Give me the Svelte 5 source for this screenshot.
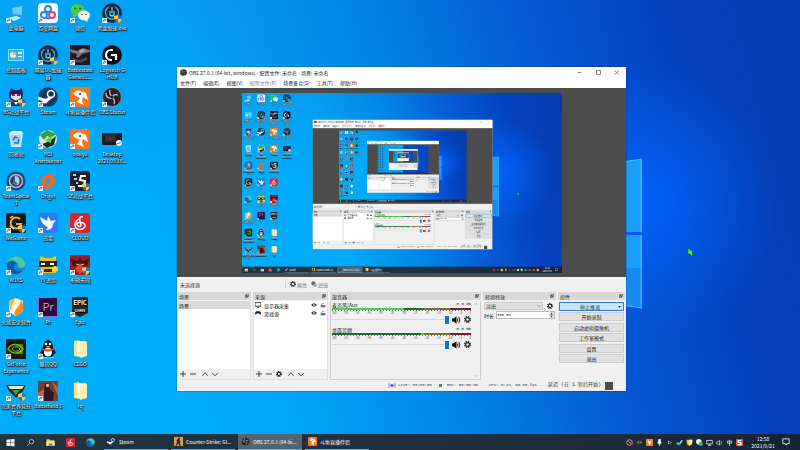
<script lang="ts">
    /** How many times the captured screen repeats inside its own preview. */
    const maxDepth = 2

    type Shortcut = {label: string; icon: string; plain?: boolean; shield?: boolean}

    // Artwork for a 20x20 box
    const art: Record<string, string> = {
        pc: '<path d="M5 4l12-2v11L6 12z" fill="#2b9be0"/><path d="M6 5l10-2v9L7 11z" fill="#66cdf6"/><path d="M2 15l8-2 5 2-7 3z" fill="#cfe9f7"/>',
        panel: '<path d="M2 4h16v12H2z" fill="#8fdcfa"/><path d="M3 5h14v10H3z" fill="#3ab2ea"/><circle cx="7" cy="10" r="3" fill="#d9f4ff"/><path d="M7 10V7a3 3 0 0 1 3 3z" fill="#f4b73b"/><path d="M12 7h4v2h-4zM12 11h4v1h-4z" fill="#e8f9ff"/>',
        helmet: '<path d="M3 7l2-6 3 2h5l3-2 1 6-1 5-6 4-6-4z" fill="#1d2553"/><path d="M5 7h10v4l-5 3-5-3z" fill="#e3dfea"/><path d="M5 7h4v2H6zM11 7h4l-1 2h-3z" fill="#7a2f62"/><path d="M3 14l5 1 2-2 2 2 4-1 1 5H3z" fill="#28336b"/><path d="M8 15h4l-2 3z" fill="#fff"/>',
        bin: '<path d="M3 4h14l-2 14H5z" fill="#cfeafa"/><path d="M3 4l3-2h9l2 2z" fill="#f6fbff"/><path d="M5 6h10l-1 10H6z" fill="#a4d4f2"/><path d="M7 11l2-3 3 1M13 10l-1 4H8" fill="none" stroke="#1978d0" stroke-width="1.5"/>',
        teamspeak: '<circle cx="10" cy="10" r="9.5" fill="#233f6c"/><circle cx="10" cy="10" r="6.5" fill="none" stroke="#a9bddb" stroke-width="1.5"/><path d="M8 5c6-1 7 5 4 9-3 0-5-1-5-3z" fill="#b7c9e2"/><path d="M8 5v6l3 2" fill="none" stroke="#233f6c" stroke-width="1.500"/>',
        wegame: '<rect width="20" height="20" rx="2" fill="#15171b"/><path d="M14 6a5.500 5.500 0 1 0 0 8l1-3h-5" fill="none" stroke="#e8b12c" stroke-width="2"/><path d="M4 5l3-2M4 13l4 3" stroke="#f4e4ad" stroke-width="1.500"/>',
        edge: '<circle cx="10" cy="10" r="9.5" fill="#1688d4"/><path d="M1 8C3 0 16-2 19 8c1 4-3 6-7 4 2-4-3-7-6-4-2 1-4 1-5 0z" fill="#4cc9a5"/><path d="M1 9c2-5 9-4 9 0-4 2-2 8 6 7-4 5-15 4-15-7z" fill="#0e5cae"/>',
        fire: '<path d="M3 4l7-3 7 3v8c0 4-7 7-7 7s-7-3-7-7z" fill="#fff4e1"/><path d="M3 4l6-3c0 5-5 7-3 14-3-3-3-6-3-11z" fill="#ffb02e"/><path d="M15 3c4 6 3 12-5 16-5-5 4-8 5-16z" fill="#ff8a16"/>',
        nvidia: '<rect width="20" height="20" fill="#141a12"/><path d="M2 10c3-6 11-6 15 0-4 6-11 5-15 0z" fill="none" stroke="#76b900" stroke-width="1.4"/><path d="M6 10c2-3 6-3 8 0-2 3-6 3-8 0z" fill="none" stroke="#76b900"/><path d="M10 5h7v10h-7v-2c4 0 5-2 5-3s-2-3-5-3z" fill="#76b900" opacity=".6"/>',
        wings: '<path d="M0 4h20l-3 6-7 7-7-7z" fill="#202b24"/><path d="M2 5h16l-2 3H4z" fill="#e7ebe1"/><path d="M6 9h8l-4 5z" fill="#3f9b54"/>',
        netdisk: '<rect width="20" height="20" rx="4" fill="#f8fafe"/><circle cx="10" cy="6" r="3" fill="none" stroke="#2883f3" stroke-width="2"/><circle cx="6" cy="12" r="3" fill="none" stroke="#2883f3" stroke-width="2"/><circle cx="14" cy="12" r="3" fill="none" stroke="#e5405d" stroke-width="2"/><path d="M8 14q2 3 5 0" fill="none" stroke="#2883f3" stroke-width="2"/>',
        uu: '<circle cx="10" cy="10" r="9.8" fill="#17243c"/><path d="M7 4a6.500 6.500 0 1 0 6 0" fill="none" stroke="#37b4d8" stroke-width="1.300"/><path d="M8 8v4q2 2 4 0V8M10 4v6" fill="none" stroke="#7fd9e8" stroke-width="1.200"/>',
        steam: '<circle cx="10" cy="10" r="9.800" fill="#123b63"/><path d="M0 11l8 3 5-4" fill="none" stroke="#fff" stroke-width="3"/><circle cx="13" cy="7" r="3.500" fill="#123b63" stroke="#fff" stroke-width="1.500"/><circle cx="7" cy="14" r="2.500" fill="#fff"/>',
        msi: '<circle cx="10" cy="10" r="9" fill="#dbe9d2"/><path d="M2 6l7-5 9 4-5 4-4-2-3 4z" fill="#2ba046"/><path d="M4 15l8-3 6-5-2 9-7 3z" fill="#1e2c26"/><path d="M7 12l7-6-1 8z" fill="#5fd13c"/>',
        origin: '<path d="M12 0c-1 2-1 3 0 3 8 3 6 13-1 14l-4 3c1-2 1-3 0-3C0 14 3 4 9 4z" fill="#f26a21"/><circle cx="10" cy="10" r="2.500" fill="#0ba5ee"/>',
        bird: '<rect width="20" height="20" rx="3" fill="#2c7df1"/><path d="M2 4l7 4 1-5 3 5 5-1-3 4c0 4-3 6-7 6l2-3c-4-1-7-5-8-10z" fill="#fff"/>',
        yy: '<path d="M2 1l5 2h6l5-2v17H3z" fill="#f6bd15"/><path d="M1 6h18v6H1z" fill="#27201c"/><path d="M3 8h4v2H3zM12 8h4v2h-4z" fill="#fff"/><path d="M6 14h8v3H6z" fill="#4b250f"/><circle cx="17" cy="14" r="3" fill="#ffd54b"/>',
        pr: '<rect width="20" height="20" fill="#2a0b3d"/><rect x=".5" y=".5" width="19" height="19" fill="none" stroke="#9b5fd0"/><text x="10" y="14" font-size="11" text-anchor="middle" fill="#e09cff">Pr</text>',
        qq: '<path d="M5 8c0-9 10-9 10 0l3 6-2 1-2 3H6l-2-3-2-1z" fill="#111820"/><ellipse cx="10" cy="13" rx="4" ry="4.500" fill="#fff"/><circle cx="8" cy="5" r="1.300" fill="#fff"/><circle cx="12" cy="5" r="1.300" fill="#fff"/><path d="M4 9q6 3 12 0v2q-6 3-12 0z" fill="#e52b26"/><path d="M7 7h6l-3 1zM4 18h5v1H4zM11 18h5v1h-5z" fill="#ffad1d"/>',
        battlefield: '<rect width="20" height="20" fill="#70402f"/><path d="M7 2l4 1 1 5 4 4-1 8H5l1-9z" fill="#2c1a1a"/><path d="M0 12l6-4v12H0zM14 1l6 5v9z" fill="#b7654a"/><path d="M8 3h3v3H8z" fill="#d8a487"/>',
        wechat: '<ellipse cx="7.500" cy="7" rx="7" ry="6" fill="#4bcb4b"/><path d="M3 10v5l4-2z" fill="#4bcb4b"/><ellipse cx="14" cy="12.500" rx="6" ry="5" fill="#f0f3ef"/><path d="M17 15l1 4-4-2z" fill="#f0f3ef"/><circle cx="5" cy="5.500" r="1" fill="#17652a"/><circle cx="10" cy="5.500" r="1" fill="#17652a"/><circle cx="12" cy="11.500" r=".8" fill="#5d6962"/><circle cx="16" cy="11.500" r=".8" fill="#5d6962"/>',
        tarkov: '<rect width="20" height="20" fill="#1b1a22"/><path d="M0 4l8 2 5-3 7 2v2l-8 2-4 4-2-1 1-3-7-2z" fill="#78707a"/><path d="M9 5l4-1 2 2-5 2z" fill="#b9a9a6"/><path d="M3 13l6 2 8-3v3l-7 3-7-2z" fill="#4a4252"/>',
        douyu: '<rect width="20" height="20" rx="3" fill="#f57718"/><path d="M3 6l5-3 8 3 2 7-5-3-1 4 2 4-7-3 3-4-6-3z" fill="#fff"/><circle cx="10" cy="7" r="1" fill="#333"/>',
        five: '<rect width="20" height="20" rx="3" fill="#191f30"/><path d="M3 4h3M4 8h3M6 12h2" fill="none" stroke="#fff" stroke-width="1.500"/><path d="M16 5h-5l-1 4 5 1-1 5H8" fill="none" stroke="#fff" stroke-width="2"/>',
        netease: '<rect width="20" height="20" rx="3" fill="#e1202e"/><path d="M13 4c-3-1-4 1-3 4l1 4c-1 3-4 1-4-1s6-3 8 1c1 5-10 7-10 0 0-3 2-5 4-6" fill="none" stroke="#fff" stroke-width="1.500"/>',
        redgame: '<rect width="20" height="20" fill="#9c1d23"/><path d="M0 3l7 3 3-3 3 3 7-3-3 8H3z" fill="#4f1118"/><path d="M5 14l5-6 5 6-5 5z" fill="#dc453b"/><path d="M6 9l3 1M14 9l-3 1" stroke="#ffcc8c"/>',
        epic: '<path d="M2 0h16v16l-8 4-8-4z" fill="#26262a"/><text x="10" y="8" font-size="6" font-weight="700" text-anchor="middle" fill="#fff">EPIC</text><text x="10" y="15" font-size="3" font-weight="700" text-anchor="middle" fill="#fff">GAMES</text>',
        folder: '<path d="M4 2l5-1 1 17-6-1z" fill="#ffe08a"/><path d="M7 2h9v15H7z" fill="#fffdf0"/><path d="M10 4l7-1v14l-7 2z" fill="#ffedb2"/>',
        logitech: '<circle cx="10" cy="10" r="9.800" fill="#08090b"/><path d="M11 5H9a5 5 0 0 0 0 10h1M9 10h5v5" fill="none" stroke="#fff" stroke-width="2.200"/>',
        obs: '<circle cx="10" cy="10" r="9.500" fill="#242128" stroke="#8d8b90"/><path d="M8 3a5 5 0 0 0 4 7M16 8a5 5 0 0 0-7 4M12 17a5 5 0 0 0-3-7M4 6q0 6 6 5" fill="none" stroke="#c4c2c7" stroke-width="1.300"/><circle cx="10" cy="10" r="1.500" fill="#242128"/>',
        video: '<path d="M0 4h20v12H0z" fill="#1b1b20"/><path d="M3 6h11v7H3z" fill="#303036"/><circle cx="8" cy="10" r="1.500" fill="#8b2938"/><circle cx="17" cy="14" r="3" fill="#eef6ff"/><path d="M15.500 14l1 1 2-2" fill="none" stroke="#2475e6"/>',
        csgo: '<rect width="20" height="20" fill="#dba33d"/><path d="M11 1l3 2-2 4 3 2-2 3 2 8h-3l-3-6-3 6H3l4-10-2-2 4-5z" fill="#3b2820"/>',
        explorer: '<path d="M1 3h7l2 2h9v12H1z" fill="#f5c542"/><path d="M1 8h18v9H1z" fill="#ffe79a"/><path d="M6 12h8v5H6z" fill="#3393d9"/>'
    }

    const shortcuts: Shortcut[] = [
        {label: '此电脑', icon: 'pc'},
        {label: '控制面板', icon: 'panel', plain: true},
        {label: 'B5对战平台', icon: 'helmet', shield: true},
        {label: '回收站', icon: 'bin', plain: true},
        {label: 'TeamSpeak\n3', icon: 'teamspeak'},
        {label: 'WeGame', icon: 'wegame', shield: true},
        {label: 'W10S', icon: 'edge'},
        {label: '火绒安全软件', icon: 'fire'},
        {label: 'GeForce\nExperience', icon: 'nvidia'},
        {label: '完美世界竞技\n平台', icon: 'wings', shield: true},
        {label: '百度网盘', icon: 'netdisk'},
        {label: '网易UU加速\n器', icon: 'uu', shield: true},
        {label: 'Steam', icon: 'steam'},
        {label: 'MSI\nAfterburner', icon: 'msi'},
        {label: 'Origin', icon: 'origin'},
        {label: '迅雷', icon: 'bird'},
        {label: 'YY语音', icon: 'yy'},
        {label: 'Pr', icon: 'pr'},
        {label: '腾讯QQ', icon: 'qq'},
        {label: 'Battlefield 1', icon: 'battlefield'},
        {label: '微信', icon: 'wechat'},
        {label: 'Battlestate\nGames L...', icon: 'tarkov'},
        {label: '斗鱼直播伴侣', icon: 'douyu'},
        {label: 'douyu', icon: 'douyu'},
        {label: '5E对战平台', icon: 'five', shield: true},
        {label: 'CLOUD', icon: 'netease'},
        {label: '永劫无间', icon: 'redgame', shield: true},
        {label: 'Epic', icon: 'epic'},
        {label: 'CSGO', icon: 'folder', plain: true},
        {label: 'rq', icon: 'folder', plain: true},
        {label: '黑盒加速.exe', icon: 'uu', shield: true},
        {label: 'Logitech G\nHUB', icon: 'logitech'},
        {label: 'OBS Studio', icon: 'obs'},
        {label: 'Desktop\n2021.09.18...', icon: 'video', plain: true}
    ]

    const menus = ['文件(F)', '编辑(E)', '视图(V)', '配置文件(P)', '场景集合(S)', '工具(T)', '帮助(H)']
    const controls = ['停止推流', '开始录制', '启动虚拟摄像机', '工作室模式', '设置', '退出']
    const scale = [-60, -55, -50, -45, -40, -35, -30, -25, -20, -15, -10, -5, 0]
    const channels = [
        {name: '麦克风/Aux', level: 52, kind: 'live'},
        {name: '桌面音频', level: 0, kind: 'quiet'}
    ]
    const pinned = [
        {name: '文件资源管理器', icon: 'explorer'},
        {name: '网易云音乐', icon: 'netease'},
        {name: 'Microsoft Edge', icon: 'edge'}
    ]
    const tasks = [
        {name: 'Steam', icon: 'steam'},
        {name: 'Counter-Strike: Gl...', icon: 'csgo'},
        {name: 'OBS 27.0.1 (64-bi...', icon: 'obs', active: true},
        {name: '斗鱼直播伴侣', icon: 'douyu'}
    ]

    // Tray artwork uses a 10x10 box
    const tray = [
        '<circle cx="5" cy="5" r="4" fill="#222" stroke="#ddd"/><circle cx="7" cy="7" r="2" fill="#e33"/><path d="M3 3l4 3" stroke="#ddd"/>',
        '<path d="M1 5q4-4 8 0-4 4-8 0z" fill="#76b900"/><circle cx="5" cy="5" r="1.500" fill="#18301a"/>',
        '<path d="M0 0h10v10H0z" fill="#f08222"/><path d="M2 2l6 2-3 5z" fill="#fff"/>',
        '<rect x="3" width="4" height="7" rx="2" fill="#fff"/><path d="M2 5q3 5 6 0M5 8v2" stroke="#fff" fill="none"/>',
        '<path d="M3 2v6l5-3z" fill="#a9b4bf"/><circle cx="5" cy="5" r="1" fill="#111"/>',
        '<path d="M1 6l4 1 4-5" fill="none" stroke="#d8e8f8" stroke-width="2"/><circle cx="4" cy="7" r="2" fill="#57a0df"/>',
        '<path d="M1 1h8v4q0 3-4 5-4-2-4-5z" fill="#ffc247"/><path d="M5 1v8q4-2 4-4V1z" fill="#fff1cf"/>',
        '<circle cx="4" cy="4" r="4" fill="#e4f2e9"/><circle cx="7" cy="7" r="3" fill="#35b567"/>',
        '<path d="M1 2h8v5H1zM5 7v2M3 9h4" fill="none" stroke="#fff"/>',
        '<path d="M1 4v3h2l2 2V2L3 4zM7 3q2 2 0 5" fill="none" stroke="#ddd"/>',
        '<path d="M2 3h6v3H2zM5 1v9" fill="none" stroke="#eee"/>',
        '<rect width="10" height="10" rx="1" fill="#f04d24"/><path d="M8 2H3v3h4v3H2" fill="none" stroke="#fff" stroke-width="1.500"/>'
    ]
</script>

{#snippet glyph(name: string)}
    <svg class="glyph" viewBox="0 0 20 20" aria-hidden="true">{@html art[name]}</svg>
{/snippet}

{#snippet gear()}
    <svg class="tool" viewBox="0 0 10 10" aria-hidden="true">
        <circle cx="5" cy="5" r="4" fill="none" stroke="currentColor" stroke-width="2" stroke-dasharray="2 1.140" />
        <circle cx="5" cy="5" r="2.700" fill="none" stroke="currentColor" stroke-width="1.600" />
    </svg>
{/snippet}

{#snippet stroke(d: string)}
    <svg class="tool" viewBox="0 0 10 10" aria-hidden="true">
        <path {d} fill="none" stroke="currentColor" stroke-width="1.400" />
    </svg>
{/snippet}

{#snippet dockTitle(name: string)}
    <header>
        <h2>{name}</h2>
        <button aria-label="浮动">
            <svg viewBox="0 0 10 10"><path d="M3 1h6v5H3zM1 4h5v5H1z" fill="#ddd" stroke="#333" stroke-width="1.500" /></svg>
        </button>
    </header>
{/snippet}

<!-- The innermost screens are too small for text, so only their blocks are drawn -->
{#snippet sketch(depth: number)}
    <path d="M0 0h400v434H0z" fill="#00a4f4" />
    <path d="M400 0h400v434H400z" fill="#0648c2" />
    <path d="M0 434h800v16H0z" fill="#1f303c" />
    <path d="M16 3v410M48 3v410M80 3v410" fill="none" stroke="#3d5c78" stroke-width="18" stroke-dasharray="20 22" />
    <path d="M626 160l16-1v149l-16-3z" fill="#199dfb" />
    <path d="M177 67h449v324H177z" fill="#f0f0f0" />
    <path d="M177 67h449v21H177z" fill="#fff" />
    <path d="M177 88h449v189H177z" fill="#4c4c4c" />
    <path d="M177 292h449v8H177z" fill="#d8d8d8" />
    <path d="M333 309h138M333 333h138" stroke="#347a42" stroke-width="4" />
    <path d="M559 307h65M559 328h65M559 349h65" stroke="#bbb" stroke-width="8" />
    {#if depth > 0}
        <svg x="241" y="92" width="320" height="180" viewBox="0 0 800 450">{@render sketch(depth - 1)}</svg>
    {/if}
{/snippet}

{#snippet desktop(depth: number)}
    <div class="desktop">
        <svg class="wallpaper" viewBox="0 0 800 450" preserveAspectRatio="none" aria-hidden="true">
            <path d="M540 174l102-15v73H540zM540 235h102v73l-102-15z" fill="#1b9dff" />
            <path d="M540 268h102v40l-102-15z" fill="#1689f6" />
            <path d="M641 159v73M641 235v73M540 174l102-15M540 293l102 15" fill="none" stroke="#37c5ff" />
        </svg>

        <nav class="shortcuts">
            {#each shortcuts as item}
                <button class="shortcut">
                    <span class="picture">
                        {@render glyph(item.icon)}
                        {#if !item.plain}
                            <svg class="arrow" viewBox="0 0 6 6"><path d="M0 0h6v6H0z" fill="#f4f8fc" /><path d="M1 5q0-3 3-3M3 1l2 1-2 2" fill="none" stroke="#1c62b4" /></svg>
                        {/if}
                        {#if item.shield}
                            <svg class="shield" viewBox="0 0 8 8"><path d="M0 1l4-1v4H0zM4 4h4q-1 3-4 4z" fill="#ffc83d" /><path d="M4 0l4 1v3H4zM0 4h4v4Q1 7 0 4z" fill="#2677c9" /></svg>
                        {/if}
                    </span>
                    <span class="name">{item.label}</span>
                </button>
            {/each}
        </nav>

        <main class="window">
            <div class="titlebar">
                {@render glyph('obs')}
                <h1>OBS 27.0.1 (64-bit, windows) - 配置文件: 未命名 - 场景: 未命名</h1>
                <button aria-label="最小化">{@render stroke('M1 5h8')}</button>
                <button aria-label="最大化">{@render stroke('M1 1h8v8H1z')}</button>
                <button aria-label="关闭">{@render stroke('M1 1l8 8M9 1l-8 8')}</button>
            </div>
            <nav class="menubar">
                {#each menus as menu, i}
                    <button class:muted={i === 3}>{menu}</button>
                {/each}
            </nav>

            <div class="preview">
                <svg class="capture" viewBox="0 0 800 450" aria-hidden="true" inert>
                    {#if depth < maxDepth}
                        <foreignObject width="800" height="450">
                            {@render desktop(depth + 1)}
                        </foreignObject>
                    {:else}
                        {@render sketch(2)}
                    {/if}
                </svg>
            </div>

            <div class="context">
                <span>未选择源</span>
                <button>{@render gear()}属性</button>
                <button>
                    <svg class="tool" viewBox="0 0 10 10"><circle cx="4" cy="4" r="3.500" fill="#666" /><circle cx="7" cy="7" r="3" fill="#aaa" /></svg>滤镜
                </button>
            </div>

            <div class="docks">
                <section class="scenes">
                    {@render dockTitle('场景')}
                    <ul>
                        <li class="selected">场景</li>
                    </ul>
                    <div class="toolbar">
                        <button aria-label="添加">{@render stroke('M0 5h10M5 0v10')}</button>
                        <button aria-label="移除">{@render stroke('M0 5h10')}</button>
                        <button class="apart" aria-label="上移">{@render stroke('M0 8l5-5 5 5')}</button>
                        <button aria-label="下移">{@render stroke('M0 3l5 5 5-5')}</button>
                    </div>
                </section>

                <section class="sources">
                    {@render dockTitle('来源')}
                    <ul>
                        {#each ['显示器采集', '游戏源'] as source, i}
                            <li>
                                {#if i === 0}
                                    {@render stroke('M0 1h10v6H0zM3 9h4')}
                                {:else}
                                    <svg class="tool" viewBox="0 0 10 10"><path d="M2 2h6q2 1 2 5-1 2-3-1H3q-2 3-3 1 0-4 2-5z" fill="#222" /></svg>
                                {/if}
                                <span>{source}</span>
                                <button aria-label="显示">
                                    <svg class="tool" viewBox="0 0 10 10"><path d="M0 5q5-6 10 0-5 6-10 0z" fill="#333" /><circle cx="5" cy="5" r="1.500" fill="#ddd" /></svg>
                                </button>
                                <button aria-label="锁定">
                                    <svg class="tool" viewBox="0 0 10 10"><path d="M1 5h8v4H1z" fill="#777" /><path d="M3 5V3q2-3 4 0" fill="none" stroke="#888" stroke-width="1.500" /></svg>
                                </button>
                            </li>
                        {/each}
                    </ul>
                    <div class="toolbar">
                        <button aria-label="添加">{@render stroke('M0 5h10M5 0v10')}</button>
                        <button aria-label="移除">{@render stroke('M0 5h10')}</button>
                        <button aria-label="属性">{@render gear()}</button>
                        <button class="apart" aria-label="上移">{@render stroke('M0 8l5-5 5 5')}</button>
                        <button aria-label="下移">{@render stroke('M0 3l5 5 5-5')}</button>
                    </div>
                </section>

                <section class="mixer">
                    {@render dockTitle('混音器')}
                    <div class="mixer-body">
                        <div class="channels">
                            {#each channels as channel}
                                <div class="channel">
                                    <div class="channel-title">
                                        <span>{channel.name}</span>
                                        <span class="mono">0.0 dB</span>
                                    </div>
                                    <div class={`meter ${channel.kind}`}>
                                        <div class="level" style={`width: ${channel.level}%`}></div>
                                    </div>
                                    <div class="ticks"></div>
                                    <div class="scale">
                                        {#each scale as db}<span>{db}</span>{/each}
                                    </div>
                                    <div class="volume">
                                        <input type="range" value="100" aria-label={channel.name} />
                                        <button aria-label="静音">
                                            <svg class="speaker" viewBox="0 0 12 10"><path d="M0 3h2l4-3v10L2 7H0z" fill="#111" /><path d="M7 3q2 2 0 4M9 1q3 4 0 8" fill="none" stroke="#111" stroke-width="1.300" /></svg>
                                        </button>
                                        <button aria-label="音频设置">{@render gear()}</button>
                                    </div>
                                </div>
                            {/each}
                        </div>
                        <div class="scrollbar">
                            {@render stroke('M1 7l4-4 4 4')}
                            {@render stroke('M1 3l4 4 4-4')}
                        </div>
                    </div>
                </section>

                <section class="transitions">
                    {@render dockTitle('转场特效')}
                    <div class="fields">
                        <div class="field">
                            <span class="picker">
                                <select aria-label="转场特效"><option>淡出</option></select>
                                {@render stroke('M1 3l4 4 4-4')}
                            </span>
                            <button aria-label="转场设置">{@render gear()}</button>
                        </div>
                        <label class="field">
                            时长
                            <span class="spin">
                                <input class="mono" type="text" value="300 ms" />
                                <svg viewBox="0 0 6 10"><path d="M1 4l2-3 2 3zM1 6l2 3 2-3z" fill="#333" /></svg>
                            </span>
                        </label>
                    </div>
                </section>

                <section class="controls">
                    {@render dockTitle('控件')}
                    <div class="actions">
                        {#each controls as action, i}
                            <button class:primary={i === 0}>
                                <span>{action}</span>
                                {#if i === 0}
                                    <svg viewBox="0 0 6 4"><path d="M0 0h6L3 4z" fill="#154c86" /></svg>
                                {/if}
                            </button>
                        {/each}
                    </div>
                </section>
            </div>

            <footer class="status mono">
                <svg class="signal" viewBox="0 0 16 10"><path d="M4 1Q1 5 4 9M1 1q-2 4 0 8M12 1q3 4 0 8M15 1q2 4 0 8" fill="none" stroke="#6866d8" stroke-width="1.200" /><circle cx="8" cy="5" r="3" fill="#4b49c8" /></svg>
                <span class="live">LIVE: 00:00:00</span>
                <span class="dot"></span>
                <span class="rec">REC: 00:00:00</span>
                <span class="cpu">CPU: 0.4%, 60.00 fps</span>
                <span class="delay">延迟 (在 1 秒后开始)</span>
                <span class="block"></span>
            </footer>
        </main>

        <svg class="cursor" viewBox="0 0 5 8" aria-hidden="true"><path d="M0 0l5 4-1 1 1 2-2 1-1-2-2 0z" fill="#43f03a" stroke="#0b4b13" stroke-width=".5" /></svg>

        <footer class="taskbar">
            <button class="pin" aria-label="开始">
                <svg class="glyph" viewBox="0 0 20 20"><path d="M1 4l8-1v7H1zM10 3l9-1v8h-9zM1 11h8v7l-8-1zM10 11h9v8l-9-1z" fill="#f4f8fa" /></svg>
            </button>
            <button class="pin" aria-label="搜索">
                <svg class="glyph" viewBox="0 0 20 20"><circle cx="12" cy="8" r="5" fill="none" stroke="#ddd" stroke-width="1.500" /><path d="M8 12l-6 6" stroke="#ddd" stroke-width="1.500" /></svg>
            </button>
            {#each pinned as item}
                <button class="pin" aria-label={item.name}>{@render glyph(item.icon)}</button>
            {/each}
            <div class="tasks">
                {#each tasks as task}
                    <button class="task" class:active={task.active}>
                        {@render glyph(task.icon)}
                        <span>{task.name}</span>
                    </button>
                {/each}
            </div>
            <div class="tray">
                {#each tray as icon}
                    <svg viewBox="0 0 10 10" aria-hidden="true">{@html icon}</svg>
                {/each}
            </div>
            <div class="clock">
                <time>12:58</time>
                <span>2021/9/21</span>
            </div>
            <button class="notice" aria-label="通知">
                <svg viewBox="0 0 10 10"><path d="M1 1h8v6H6L5 9 4 7H1z" fill="none" stroke="#fff" /></svg>
            </button>
        </footer>
    </div>
{/snippet}

<div class="screen">
    {@render desktop(0)}
</div>

<style>
    :global(body) {
        margin: 0;
        overflow: hidden;
    }

    .screen {
        height: 100vh;
    }

    .desktop {
        position: relative;
        display: flex;
        flex-direction: column;
        height: 100%;
        overflow: hidden;
        font: 5px/7px 'Noto Sans CJK SC', sans-serif;
        color: #222;
        background:
            radial-gradient(circle at 80% 45%, rgba(0, 100, 255, 0.9), rgba(0, 90, 245, 0) 20%),
            radial-gradient(ellipse at 20% 0, rgba(20, 110, 205, 0.2), rgba(20, 110, 205, 0) 30%),
            linear-gradient(76deg, #00aef8 0%, #00aafa 30%, #0088e6 50%, #0558d2 70%, #0442bf 84%, #063bac 100%);
    }

    .desktop * {
        box-sizing: border-box;
    }

    .wallpaper {
        position: absolute;
        inset: 0;
        width: 100%;
        height: 100%;
    }

    button,
    input,
    select {
        margin: 0;
        padding: 0;
        border: 0;
        background: none;
        font: inherit;
        color: inherit;
    }

    svg {
        display: block;
        flex: none;
    }

    h1,
    h2,
    ul {
        margin: 0;
        padding: 0;
        font: inherit;
        list-style: none;
    }

    .mono {
        font-family: 'Liberation Mono', 'Noto Sans CJK SC', monospace;
        font-size: 4px;
    }

    .tool {
        width: 6px;
        height: 6px;
    }

    /* Desktop shortcuts */
    .shortcuts {
        position: relative;
        flex: 1;
        min-height: 0;
        display: grid;
        grid-auto-flow: column;
        grid-template-rows: repeat(10, 42px);
        grid-auto-columns: 32px;
    }

    .shortcut {
        display: flex;
        flex-direction: column;
        align-items: center;
        gap: 1px;
        padding-top: 3px;
        color: #fff;
        text-shadow: 0 0 1px #000, 0 1px 1px #000, 1px 1px 1px #000;
    }

    .picture {
        position: relative;
    }

    .picture .glyph {
        width: 20px;
        height: 20px;
    }

    .arrow,
    .shield {
        position: absolute;
        bottom: 0;
    }

    .arrow {
        left: 0;
        width: 5px;
        height: 5px;
    }

    .shield {
        right: 0;
        width: 8px;
        height: 8px;
    }

    .name {
        white-space: pre;
    }

    /* OBS window */
    .window {
        position: absolute;
        inset: 67px 174px 59px 177px;
        display: flex;
        flex-direction: column;
        background: #f0f0f0;
        box-shadow: 0 0 1px #123;
    }

    .titlebar {
        display: flex;
        align-items: center;
        height: 11px;
        padding: 0 5px 0 3px;
        background: #fff;
    }

    .titlebar .glyph {
        width: 7px;
        height: 7px;
        margin-right: 2px;
    }

    .titlebar h1 {
        flex: 1;
    }

    .titlebar button {
        display: grid;
        place-items: center;
        width: 19px;
        height: 11px;
        color: #555;
    }

    .titlebar .tool {
        width: 5px;
        height: 5px;
    }

    .titlebar button:last-child {
        width: 9px;
        margin-left: 4px;
    }

    .menubar {
        display: flex;
        gap: 7px;
        height: 10px;
        padding: 1px 3px 2px;
        background: #fff;
    }

    .muted {
        color: #888;
    }

    .preview {
        flex: 1;
        display: grid;
        place-items: center;
        min-height: 0;
        padding: 4px 0;
        background: #4c4c4c;
    }

    .capture {
        height: 180px;
        max-width: 100%;
        aspect-ratio: 16 / 9;
    }

    .context {
        display: flex;
        align-items: center;
        height: 14px;
        padding: 0 3px;
        color: #333;
    }

    .context span {
        width: 105px;
    }

    .context button {
        display: flex;
        align-items: center;
        gap: 1px;
        padding-left: 4px;
        color: #777;
    }

    .context button:nth-of-type(1) {
        border-left: 1px solid #ccc;
    }

    .context .tool {
        color: #333;
    }

    .docks {
        display: grid;
        grid-template-columns: 74fr 75fr 151fr 73fr 67fr;
        gap: 2px;
        height: 89px;
        padding: 1px 1px 0 0;
    }

    section {
        display: flex;
        flex-direction: column;
        min-width: 0;
    }

    header {
        display: flex;
        align-items: center;
        justify-content: space-between;
        height: 8px;
        padding: 0 2px;
        background: #d8d8d8;
    }

    header svg {
        width: 4px;
        height: 4px;
    }

    ul {
        flex: 1;
        margin-top: 1px;
        border: 1px solid #ddd;
        border-width: 0 1px;
        background: #fff;
    }

    li {
        display: flex;
        align-items: center;
        gap: 3px;
        height: 8px;
        padding: 0 1px;
    }

    li span {
        flex: 1;
    }

    .selected {
        background: #d9d9d9;
    }

    .toolbar {
        display: flex;
        align-items: center;
        gap: 4px;
        height: 11px;
        padding: 0 2px;
        border: 1px solid #ddd;
        border-top: 0;
    }

    .toolbar .apart {
        margin-left: 2px;
    }

    .mixer-body {
        flex: 1;
        display: flex;
        margin-top: 1px;
        border: 1px solid #ccc;
        border-top: 0;
    }

    .channels {
        flex: 1;
        min-width: 0;
        padding: 0 1px;
    }

    .channel {
        height: 25px;
    }

    .channel-title {
        display: flex;
        justify-content: space-between;
        height: 7px;
    }

    .meter {
        height: 2px;
        background: linear-gradient(90deg, #226b2a 66%, #78732c 66% 85%, #702433 85%);
    }

    .level {
        height: 100%;
        background: #43d347;
    }

    .quiet {
        background: linear-gradient(90deg, #1f6a2b 64%, #43d347 64% 66%, #78732c 66% 85%, #702433 85%);
    }

    .ticks {
        height: 1px;
        background: repeating-linear-gradient(90deg, #777 0 1px, transparent 1px 3px);
    }

    .scale {
        display: flex;
        justify-content: space-between;
        height: 4px;
        font-size: 3px;
        line-height: 4px;
        color: #555;
    }

    .volume {
        display: flex;
        align-items: center;
        gap: 3px;
        height: 9px;
    }

    .volume input {
        flex: 1;
        min-width: 0;
        height: 8px;
        appearance: none;
        background: linear-gradient(#d7d7d7, #d7d7d7) center / 100% 1px no-repeat;
    }

    .volume input::-webkit-slider-thumb {
        appearance: none;
        width: 4px;
        height: 8px;
        background: #1474d4;
    }

    .speaker {
        width: 9px;
        height: 8px;
    }

    .volume .tool {
        width: 7px;
        height: 7px;
        color: #222;
    }

    .scrollbar {
        flex: none;
        display: flex;
        flex-direction: column;
        align-items: center;
        justify-content: space-between;
        width: 8px;
        padding: 1px;
        color: #aaa;
    }

    .scrollbar .tool {
        width: 4px;
        height: 4px;
    }

    .fields {
        display: grid;
        gap: 1px;
        padding: 2px 1px;
    }

    .field {
        display: flex;
        align-items: center;
        gap: 2px;
        height: 8px;
    }

    .picker {
        position: relative;
        flex: 1;
        margin-right: 2px;
    }

    .picker select {
        display: block;
        width: 100%;
        height: 8px;
        padding-left: 1px;
        appearance: none;
        border: 1px solid #ccc;
        background: #e1e1e1;
        line-height: 6px;
    }

    .picker .tool {
        position: absolute;
        top: 2px;
        right: 2px;
        width: 4px;
        height: 4px;
        color: #666;
    }

    .field button {
        width: 8px;
    }

    .spin {
        flex: 1;
        display: flex;
        align-items: center;
        height: 8px;
        border: 1px solid #bbb;
        background: #fff;
    }

    .spin input {
        flex: 1;
        min-width: 0;
        height: 6px;
    }

    .spin svg {
        width: 5px;
        height: 6px;
        background: #e5e5e5;
    }

    .actions {
        display: flex;
        flex-direction: column;
        justify-content: space-between;
        height: 63px;
        padding: 2px 1px 0;
    }

    .actions button {
        display: flex;
        align-items: center;
        height: 9px;
        padding: 0 2px;
        border: 1px solid #ccc;
        background: #e1e1e1;
    }

    .actions span {
        flex: 1;
    }

    .actions .primary {
        border-color: #2d80cf;
        background: #cce4f7;
    }

    .actions svg {
        width: 3px;
        height: 2px;
    }

    .status {
        display: flex;
        align-items: center;
        justify-content: flex-end;
        height: 11px;
        padding-right: 13px;
        color: #444;
    }

    .signal {
        width: 8px;
        height: 5px;
        margin-right: 2px;
    }

    .dot {
        width: 3px;
        height: 3px;
        margin: 0 5px 0 7px;
        background: #777;
    }

    .cpu {
        margin: 0 11px;
    }

    .delay {
        font-size: 5px;
    }

    .block {
        width: 8px;
        height: 8px;
        margin-left: 4px;
        background: #4c4c4c;
    }

    .cursor {
        position: absolute;
        top: 55%;
        left: 86%;
        width: 5px;
        height: 8px;
    }

    /* Taskbar */
    .taskbar {
        position: relative;
        display: flex;
        align-items: center;
        height: 16px;
        background: linear-gradient(90deg, #20343e, #202f3e 60%, #172438);
        color: #fff;
    }

    .pin {
        display: grid;
        place-items: center;
        width: 20px;
        height: 16px;
    }

    .taskbar .glyph {
        width: 9px;
        height: 9px;
    }

    .tasks {
        display: flex;
        gap: 3px;
        flex: 1;
        margin-left: 4px;
    }

    .task {
        display: flex;
        align-items: center;
        gap: 3px;
        width: 64px;
        height: 16px;
        padding: 0 3px;
        border-bottom: 1px solid #69aee0;
        text-align: left;
        white-space: nowrap;
    }

    .task.active {
        background: #53636f;
    }

    .tray {
        display: flex;
        gap: 3px;
    }

    .tray svg {
        width: 7px;
        height: 7px;
    }

    .clock {
        display: flex;
        flex-direction: column;
        align-items: center;
        width: 34px;
        margin-left: 3px;
    }

    .notice {
        margin: 0 10px 0 2px;
    }

    .notice svg {
        width: 8px;
        height: 8px;
    }
</style>
